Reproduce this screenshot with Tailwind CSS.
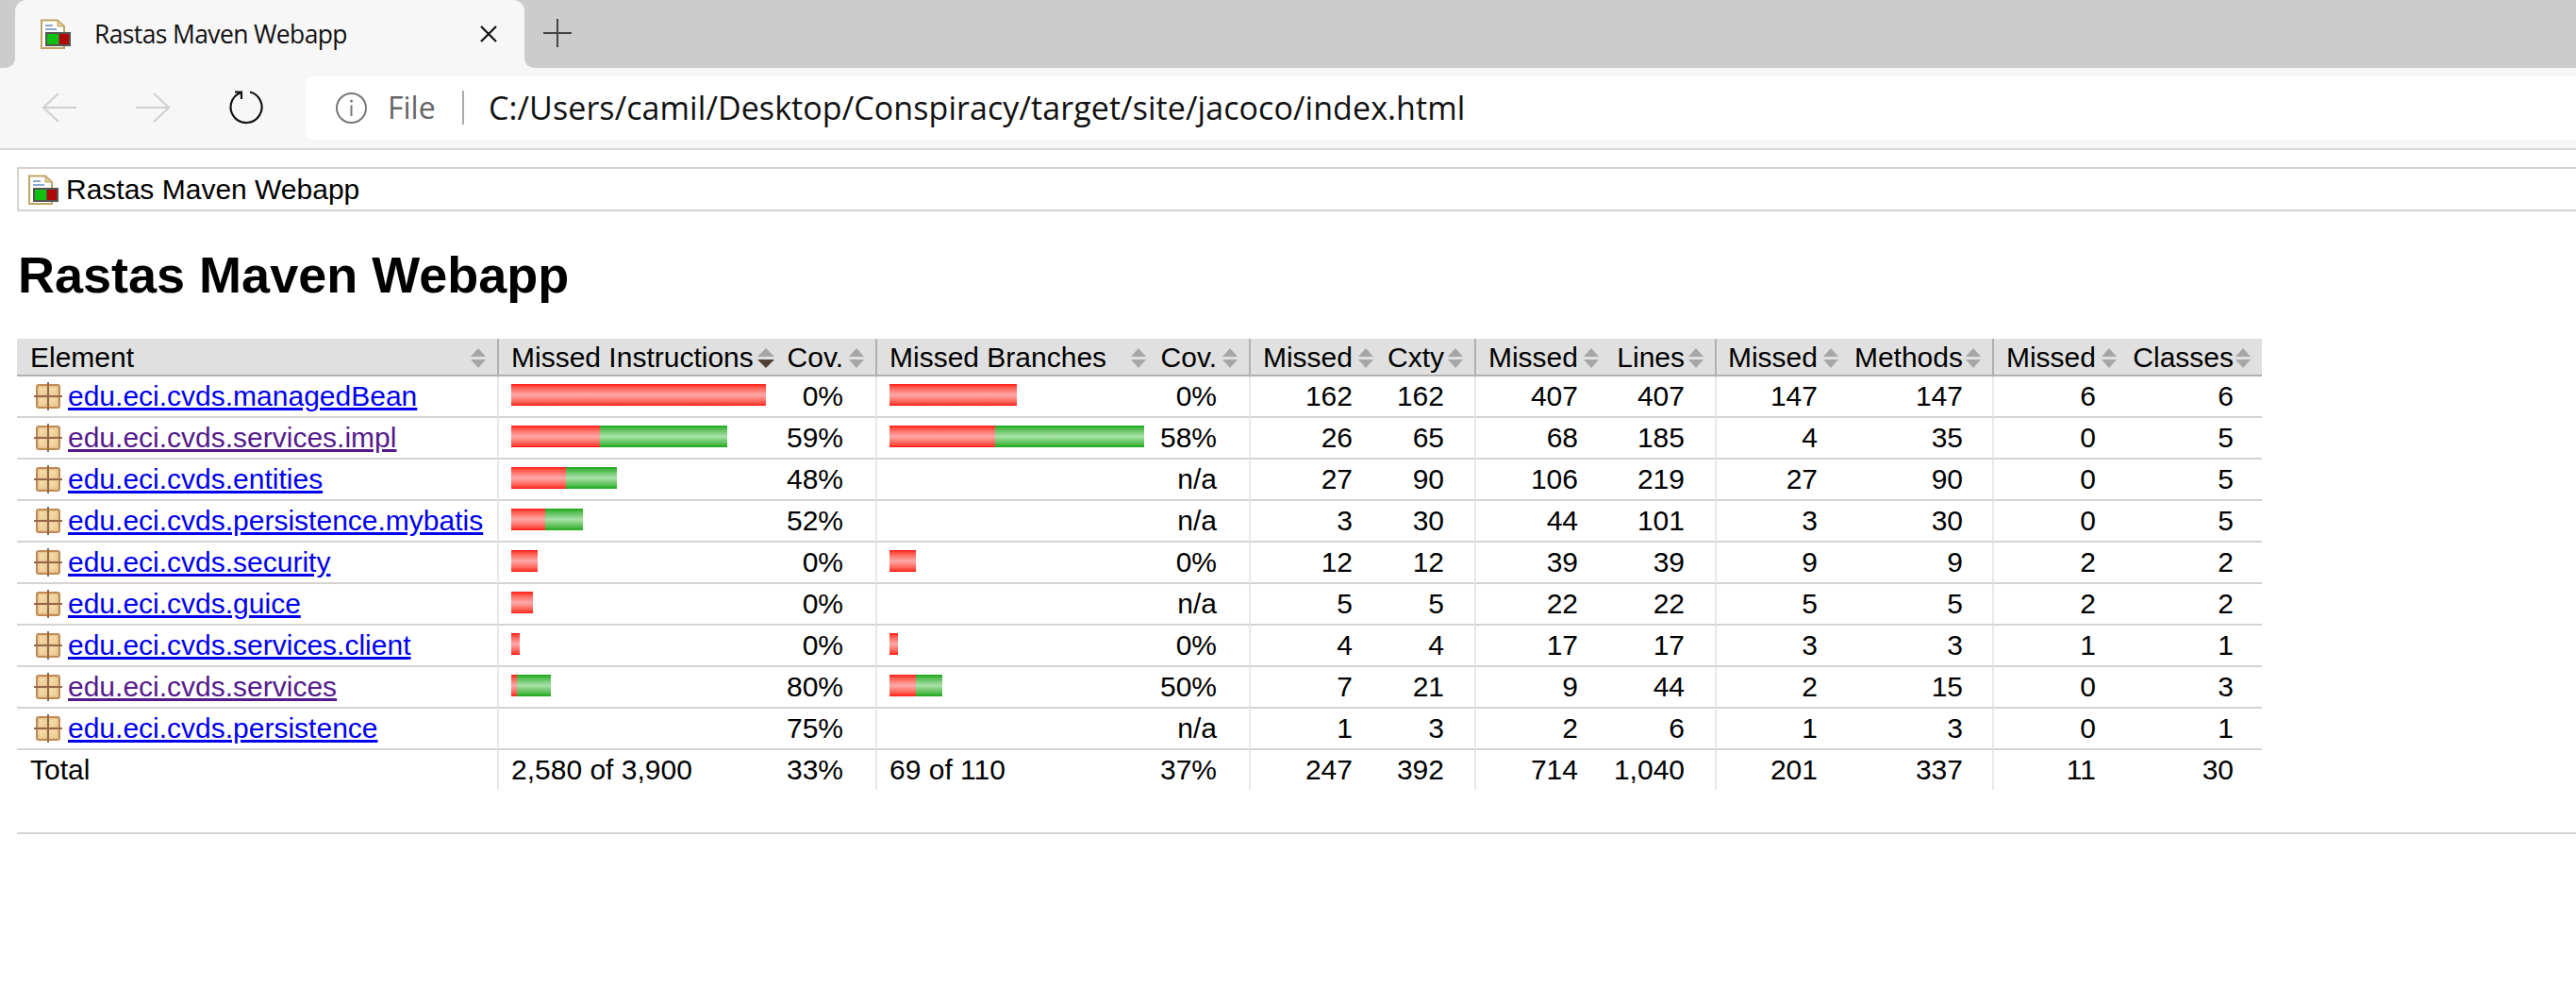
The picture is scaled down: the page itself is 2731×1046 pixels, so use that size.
<!DOCTYPE html>
<html>
<head>
<meta charset="utf-8">
<title>Rastas Maven Webapp</title>
<script src="https://cdn.jsdelivr.net/npm/@tailwindcss/browser@4"></script>
</head>
<body class="bg-white overflow-hidden h-[1046px] font-['Liberation_Sans',Arial,sans-serif] text-[30px] text-black">
<svg width="0" height="0" class="absolute">
  <defs>
    <linearGradient id="cell" x1="0" y1="0" x2="1" y2="1"><stop offset="0" stop-color="#f6dfae"/><stop offset="1" stop-color="#eccb92"/></linearGradient>
    <symbol id="report" viewBox="0 0 32 32">
      <path d="M1 1.5H18L25 8V31H1Z" fill="#fff" stroke="#bfa565" stroke-width="2"/>
      <path d="M18 1.5V8H25Z" fill="#e6cf95" stroke="#bfa565" stroke-width="1"/>
      <rect x="5" y="6" width="8" height="2" fill="#8ea6d0"/>
      <rect x="5" y="10" width="12" height="2" fill="#8ea6d0"/>
      <rect x="5" y="14" width="27" height="15" fill="#555"/>
      <rect x="7" y="16" width="12" height="11" fill="#10c010"/>
      <rect x="20" y="16" width="10" height="11" fill="#b00808"/>
    </symbol>
    <symbol id="pkg" viewBox="0 0 30 30">
      <rect x="3" y="3" width="24" height="24" rx="2" fill="#e8c48e" stroke="#c08a55" stroke-width="2"/>
      <rect x="5.5" y="5.5" width="8" height="8" fill="url(#cell)"/>
      <rect x="16.5" y="5.5" width="8" height="8" fill="url(#cell)"/>
      <rect x="5.5" y="16.5" width="8" height="8" fill="url(#cell)"/>
      <rect x="16.5" y="16.5" width="8" height="8" fill="url(#cell)"/>
      <path d="M15 0V30M0 15H30" stroke="#93694a" stroke-width="2"/>
    </symbol>
    <symbol id="sort" viewBox="0 0 16 21">
      <path d="M8 0L16 9H0Z" fill="#a6a6a6"/>
      <path d="M0 12H16L8 21Z" fill="#a6a6a6"/>
    </symbol>
    <symbol id="sortd" viewBox="0 0 18 21">
      <path d="M9 0L18 9H0Z" fill="#a6a6a6"/>
      <path d="M0 12H18L9 21Z" fill="#4d4136"/>
    </symbol>
  </defs>
</svg>

<div class="flex h-[72px] bg-[#f7f7f7] font-['Open_Sans',sans-serif]">
  <div class="w-[16px] bg-[#cccccc] rounded-br-[10px]"></div>
  <div class="bg-[#cccccc] w-[540px]">
    <div class="flex items-center h-[72px] bg-[#f7f7f7] rounded-t-[12px] pl-[27px] pr-[28px]">
      <svg class="w-[32px] h-[32px]"><use href="#report"/></svg>
      <span class="ml-[25px] text-[26.5px] tracking-[-0.63px] leading-none flex-1 text-[#111]">Rastas Maven Webapp</span>
      <svg class="w-[20px] h-[18px]" viewBox="0 0 20 18"><path d="M2 1L18 17M18 1L2 17" stroke="#111" stroke-width="2.2" fill="none"/></svg>
    </div>
  </div>
  <div class="flex-1 bg-[#cccccc] rounded-bl-[10px] pl-[20px] pt-[20px]">
    <svg class="w-[30px] h-[30px]" viewBox="0 0 30 30"><path d="M15 0V30M0 15H30" stroke="#444" stroke-width="2" fill="none"/></svg>
  </div>
</div>

<div class="flex items-center h-[87px] bg-[#f7f7f7] border-b-2 border-[#d6d6d6] pb-[1px] font-['Open_Sans',sans-serif]">
  <svg class="ml-[45px] w-[36px] h-[32px]" viewBox="0 0 36 32"><path d="M17 1L1 16L17 31M1 16H36" stroke="#cfcfcf" stroke-width="2" fill="none"/></svg>
  <svg class="ml-[63px] w-[36px] h-[32px]" viewBox="0 0 36 32"><path d="M19 1L35 16L19 31M35 16H0" stroke="#cfcfcf" stroke-width="2" fill="none"/></svg>
  <svg class="ml-[62px] w-[38px] h-[38px]" viewBox="0 0 38 38"><path d="M23 2.5A16.5 16.5 0 1 1 13.5 3M7 2.5H14V10" stroke="#111" stroke-width="2.2" fill="none"/></svg>
  <div class="ml-[44px] flex-1 h-[67px] bg-white rounded-l-[9px] flex items-center">
    <svg class="ml-[32px] w-[33px] h-[33px]" viewBox="0 0 33 33"><circle cx="16.5" cy="16.5" r="15.5" stroke="#777" stroke-width="2" fill="none"/><path d="M16.5 13.5V25" stroke="#777" stroke-width="2"/><circle cx="16.5" cy="9" r="1.5" fill="#777"/></svg>
    <span class="ml-[22px] w-[51px] text-[32px] leading-none text-[#666] whitespace-nowrap">File</span>
    <span class="ml-[28px] w-[2px] h-[36px] bg-[#aaaaaa]"></span>
    <span class="ml-[26px] text-[34px] tracking-[0.08px] leading-none text-[#111] whitespace-nowrap">C:/Users/camil/Desktop/Conspiracy/target/site/jacoco/index.html</span>
  </div>
</div>

<div class="ml-[18px] mt-[18px] h-[47px] border-y-2 border-l-2 border-[#d6d3ce] flex items-center pl-[10px]">
  <svg class="w-[32px] h-[32px]"><use href="#report"/></svg>
  <span class="ml-[8px] leading-none">Rastas Maven Webapp</span>
</div>

<h1 class="ml-[19px] mt-[36px] mb-[37px] text-[54px] leading-[62px] font-bold">Rastas Maven Webapp</h1>

<table class="ml-[18px] w-[2380px] table-fixed border-separate border-spacing-0 leading-none [&_td]:h-[44px] [&_td]:p-0 [&_td]:leading-none [&_tbody_td]:border-b-2 [&_tbody_td]:border-[#d6d3ce] [&_tfoot_td]:h-[42px] [&_th]:p-0 [&_th]:h-[40px] [&_th]:font-normal [&_th]:bg-[#e0e0e0] [&_th]:border-b-2 [&_th]:border-[#b0b0b0] [&_a]:underline [&_a]:text-[#0000ee]">
  <colgroup>
    <col class="w-[509px]"><col class="w-[305px]"><col class="w-[96px]"><col class="w-[299px]"><col class="w-[97px]"><col class="w-[144px]"><col class="w-[95px]"><col class="w-[144px]"><col class="w-[111px]"><col class="w-[143px]"><col class="w-[151px]"><col class="w-[144px]"><col class="w-[142px]">
  </colgroup>
  <thead>
    <tr>
      <th><div class="flex items-center justify-between pt-[2px] pl-[14px] pr-[12px]"><span>Element</span><svg class="w-[16px] h-[21px]"><use href="#sort"/></svg></div></th>
      <th class="border-l-2 border-l-[#c8c8c8]"><div class="flex items-center justify-between pt-[2px] pl-[13px] pr-[11px]"><span>Missed Instructions</span><svg class="w-[18px] h-[21px]"><use href="#sortd"/></svg></div></th>
      <th><div class="flex items-center justify-end gap-[6px] pt-[2px] pr-[12px]"><span>Cov.</span><svg class="w-[16px] h-[21px]"><use href="#sort"/></svg></div></th>
      <th class="border-l-2 border-l-[#c8c8c8]"><div class="flex items-center justify-between pt-[2px] pl-[13px] pr-[12px]"><span>Missed Branches</span><svg class="w-[16px] h-[21px]"><use href="#sort"/></svg></div></th>
      <th><div class="flex items-center justify-end gap-[6px] pt-[2px] pr-[12px]"><span>Cov.</span><svg class="w-[16px] h-[21px]"><use href="#sort"/></svg></div></th>
      <th class="border-l-2 border-l-[#c8c8c8]"><div class="flex items-center justify-end gap-[6px] pt-[2px] pr-[12px]"><span>Missed</span><svg class="w-[16px] h-[21px]"><use href="#sort"/></svg></div></th>
      <th><div class="flex items-center justify-end gap-[4px] pt-[2px] pr-[12px]"><span>Cxty</span><svg class="w-[16px] h-[21px]"><use href="#sort"/></svg></div></th>
      <th class="border-l-2 border-l-[#c8c8c8]"><div class="flex items-center justify-end gap-[6px] pt-[2px] pr-[12px]"><span>Missed</span><svg class="w-[16px] h-[21px]"><use href="#sort"/></svg></div></th>
      <th><div class="flex items-center justify-end gap-[4px] pt-[2px] pr-[12px]"><span>Lines</span><svg class="w-[16px] h-[21px]"><use href="#sort"/></svg></div></th>
      <th class="border-l-2 border-l-[#c8c8c8]"><div class="flex items-center justify-end gap-[6px] pt-[2px] pr-[12px]"><span>Missed</span><svg class="w-[16px] h-[21px]"><use href="#sort"/></svg></div></th>
      <th><div class="flex items-center justify-end gap-[3px] pt-[2px] pr-[12px]"><span>Methods</span><svg class="w-[16px] h-[21px]"><use href="#sort"/></svg></div></th>
      <th class="border-l-2 border-l-[#c8c8c8]"><div class="flex items-center justify-end gap-[6px] pt-[2px] pr-[12px]"><span>Missed</span><svg class="w-[16px] h-[21px]"><use href="#sort"/></svg></div></th>
      <th><div class="flex items-center justify-end gap-[2px] pt-[2px] pr-[12px]"><span>Classes</span><svg class="w-[16px] h-[21px]"><use href="#sort"/></svg></div></th>
    </tr>
  </thead>
  <tbody class="[&_td:nth-child(2)]:border-l-2 [&_td:nth-child(2)]:border-l-[#e8e8e8] [&_td:nth-child(4)]:border-l-2 [&_td:nth-child(4)]:border-l-[#e8e8e8] [&_td:nth-child(6)]:border-l-2 [&_td:nth-child(6)]:border-l-[#e8e8e8] [&_td:nth-child(8)]:border-l-2 [&_td:nth-child(8)]:border-l-[#e8e8e8] [&_td:nth-child(10)]:border-l-2 [&_td:nth-child(10)]:border-l-[#e8e8e8] [&_td:nth-child(12)]:border-l-2 [&_td:nth-child(12)]:border-l-[#e8e8e8] [&_td:nth-child(n+3)]:text-right [&_td:nth-child(n+3)]:pr-[34px] [&_td:nth-child(4)]:text-left! [&_td:nth-child(4)]:pr-0! [&_td:nth-child(7)]:pr-[32px]! [&_td:nth-child(9)]:pr-[32px]! [&_td:nth-child(11)]:pr-[31px]! [&_td:nth-child(13)]:pr-[30px]! [&_td:nth-child(2)]:pl-[13px] [&_td:nth-child(4)]:pl-[13px]">
    <tr>
      <td><div class="flex items-center pl-[18px] gap-[6px]"><svg class="w-[30px] h-[30px]"><use href="#pkg"/></svg><a href="#a">edu.eci.cvds.managedBean</a></div></td>
      <td><div class="flex mb-[3px]"><div class="h-[23px] w-[270px] bg-linear-to-b from-[#ff0a0a] via-[#ffa8a8] to-[#ff0a0a]"></div></div></td><td>0%</td>
      <td><div class="flex mb-[3px]"><div class="h-[23px] w-[135px] bg-linear-to-b from-[#ff0a0a] via-[#ffa8a8] to-[#ff0a0a]"></div></div></td><td>0%</td>
      <td>162</td><td>162</td><td>407</td><td>407</td><td>147</td><td>147</td><td>6</td><td>6</td>
    </tr>
    <tr>
      <td><div class="flex items-center pl-[18px] gap-[6px]"><svg class="w-[30px] h-[30px]"><use href="#pkg"/></svg><a href="#b" class="!text-[#551a8b]">edu.eci.cvds.services.impl</a></div></td>
      <td><div class="flex mb-[3px]"><div class="h-[23px] w-[94px] bg-linear-to-b from-[#ff0a0a] via-[#ffa8a8] to-[#ff0a0a]"></div><div class="h-[23px] w-[135px] bg-linear-to-b from-[#08a808] via-[#a8e2a8] to-[#08a808]"></div></div></td><td>59%</td>
      <td><div class="flex mb-[3px]"><div class="h-[23px] w-[112px] bg-linear-to-b from-[#ff0a0a] via-[#ffa8a8] to-[#ff0a0a]"></div><div class="h-[23px] w-[158px] bg-linear-to-b from-[#08a808] via-[#a8e2a8] to-[#08a808]"></div></div></td><td>58%</td>
      <td>26</td><td>65</td><td>68</td><td>185</td><td>4</td><td>35</td><td>0</td><td>5</td>
    </tr>
    <tr>
      <td><div class="flex items-center pl-[18px] gap-[6px]"><svg class="w-[30px] h-[30px]"><use href="#pkg"/></svg><a href="#c">edu.eci.cvds.entities</a></div></td>
      <td><div class="flex mb-[3px]"><div class="h-[23px] w-[58px] bg-linear-to-b from-[#ff0a0a] via-[#ffa8a8] to-[#ff0a0a]"></div><div class="h-[23px] w-[54px] bg-linear-to-b from-[#08a808] via-[#a8e2a8] to-[#08a808]"></div></div></td><td>48%</td>
      <td></td><td>n/a</td>
      <td>27</td><td>90</td><td>106</td><td>219</td><td>27</td><td>90</td><td>0</td><td>5</td>
    </tr>
    <tr>
      <td><div class="flex items-center pl-[18px] gap-[6px]"><svg class="w-[30px] h-[30px]"><use href="#pkg"/></svg><a href="#d">edu.eci.cvds.persistence.mybatis</a></div></td>
      <td><div class="flex mb-[3px]"><div class="h-[23px] w-[36px] bg-linear-to-b from-[#ff0a0a] via-[#ffa8a8] to-[#ff0a0a]"></div><div class="h-[23px] w-[40px] bg-linear-to-b from-[#08a808] via-[#a8e2a8] to-[#08a808]"></div></div></td><td>52%</td>
      <td></td><td>n/a</td>
      <td>3</td><td>30</td><td>44</td><td>101</td><td>3</td><td>30</td><td>0</td><td>5</td>
    </tr>
    <tr>
      <td><div class="flex items-center pl-[18px] gap-[6px]"><svg class="w-[30px] h-[30px]"><use href="#pkg"/></svg><a href="#e">edu.eci.cvds.security</a></div></td>
      <td><div class="flex mb-[3px]"><div class="h-[23px] w-[28px] bg-linear-to-b from-[#ff0a0a] via-[#ffa8a8] to-[#ff0a0a]"></div></div></td><td>0%</td>
      <td><div class="flex mb-[3px]"><div class="h-[23px] w-[28px] bg-linear-to-b from-[#ff0a0a] via-[#ffa8a8] to-[#ff0a0a]"></div></div></td><td>0%</td>
      <td>12</td><td>12</td><td>39</td><td>39</td><td>9</td><td>9</td><td>2</td><td>2</td>
    </tr>
    <tr>
      <td><div class="flex items-center pl-[18px] gap-[6px]"><svg class="w-[30px] h-[30px]"><use href="#pkg"/></svg><a href="#f">edu.eci.cvds.guice</a></div></td>
      <td><div class="flex mb-[3px]"><div class="h-[23px] w-[23px] bg-linear-to-b from-[#ff0a0a] via-[#ffa8a8] to-[#ff0a0a]"></div></div></td><td>0%</td>
      <td></td><td>n/a</td>
      <td>5</td><td>5</td><td>22</td><td>22</td><td>5</td><td>5</td><td>2</td><td>2</td>
    </tr>
    <tr>
      <td><div class="flex items-center pl-[18px] gap-[6px]"><svg class="w-[30px] h-[30px]"><use href="#pkg"/></svg><a href="#g">edu.eci.cvds.services.client</a></div></td>
      <td><div class="flex mb-[3px]"><div class="h-[23px] w-[9px] bg-linear-to-b from-[#ff0a0a] via-[#ffa8a8] to-[#ff0a0a]"></div></div></td><td>0%</td>
      <td><div class="flex mb-[3px]"><div class="h-[23px] w-[9px] bg-linear-to-b from-[#ff0a0a] via-[#ffa8a8] to-[#ff0a0a]"></div></div></td><td>0%</td>
      <td>4</td><td>4</td><td>17</td><td>17</td><td>3</td><td>3</td><td>1</td><td>1</td>
    </tr>
    <tr>
      <td><div class="flex items-center pl-[18px] gap-[6px]"><svg class="w-[30px] h-[30px]"><use href="#pkg"/></svg><a href="#h" class="!text-[#551a8b]">edu.eci.cvds.services</a></div></td>
      <td><div class="flex mb-[3px]"><div class="h-[23px] w-[6px] bg-linear-to-b from-[#ff0a0a] via-[#ffa8a8] to-[#ff0a0a]"></div><div class="h-[23px] w-[36px] bg-linear-to-b from-[#08a808] via-[#a8e2a8] to-[#08a808]"></div></div></td><td>80%</td>
      <td><div class="flex mb-[3px]"><div class="h-[23px] w-[28px] bg-linear-to-b from-[#ff0a0a] via-[#ffa8a8] to-[#ff0a0a]"></div><div class="h-[23px] w-[28px] bg-linear-to-b from-[#08a808] via-[#a8e2a8] to-[#08a808]"></div></div></td><td>50%</td>
      <td>7</td><td>21</td><td>9</td><td>44</td><td>2</td><td>15</td><td>0</td><td>3</td>
    </tr>
    <tr>
      <td><div class="flex items-center pl-[18px] gap-[6px]"><svg class="w-[30px] h-[30px]"><use href="#pkg"/></svg><a href="#i">edu.eci.cvds.persistence</a></div></td>
      <td></td><td>75%</td>
      <td></td><td>n/a</td>
      <td>1</td><td>3</td><td>2</td><td>6</td><td>1</td><td>3</td><td>0</td><td>1</td>
    </tr>
  </tbody>
  <tfoot class="[&_td:nth-child(2)]:border-l-2 [&_td:nth-child(2)]:border-l-[#e8e8e8] [&_td:nth-child(4)]:border-l-2 [&_td:nth-child(4)]:border-l-[#e8e8e8] [&_td:nth-child(6)]:border-l-2 [&_td:nth-child(6)]:border-l-[#e8e8e8] [&_td:nth-child(8)]:border-l-2 [&_td:nth-child(8)]:border-l-[#e8e8e8] [&_td:nth-child(10)]:border-l-2 [&_td:nth-child(10)]:border-l-[#e8e8e8] [&_td:nth-child(12)]:border-l-2 [&_td:nth-child(12)]:border-l-[#e8e8e8] [&_td:nth-child(n+3)]:text-right [&_td:nth-child(n+3)]:pr-[34px] [&_td:nth-child(4)]:text-left! [&_td:nth-child(4)]:pr-0! [&_td:nth-child(7)]:pr-[32px]! [&_td:nth-child(9)]:pr-[32px]! [&_td:nth-child(11)]:pr-[31px]! [&_td:nth-child(13)]:pr-[30px]! [&_td:nth-child(2)]:pl-[13px] [&_td:nth-child(4)]:pl-[13px]">
    <tr>
      <td class="pl-[14px]!">Total</td>
      <td>2,580 of 3,900</td><td>33%</td><td>69 of 110</td><td>37%</td>
      <td>247</td><td>392</td><td>714</td><td>1,040</td><td>201</td><td>337</td><td>11</td><td>30</td>
    </tr>
  </tfoot>
</table>

<div class="ml-[18px] mt-[45px] h-[2px] bg-[#d6d3ce]"></div>
</body>
</html>
